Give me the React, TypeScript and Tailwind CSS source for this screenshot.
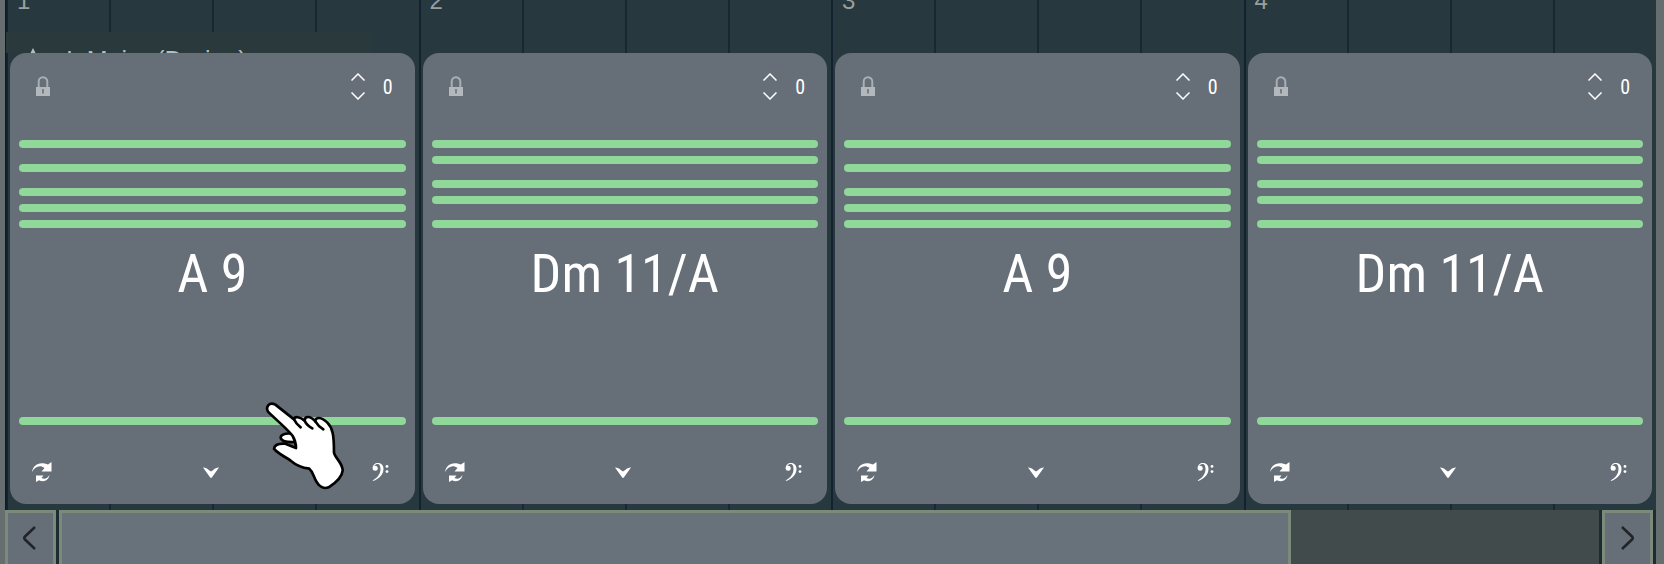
import React from 'react';

const NARROW = "font-['Roboto_Condensed','Liberation_Sans',sans-serif]";

const chords = [
  { bar: 1, name: 'A 9', notes: [0, 3, 6, 8, 10] },
  { bar: 2, name: 'Dm 11/A', notes: [0, 2, 5, 7, 10] },
  { bar: 3, name: 'A 9', notes: [0, 3, 6, 8, 10] },
  { bar: 4, name: 'Dm 11/A', notes: [0, 2, 5, 7, 10] },
];

const SLOTS = Array.from({ length: 11 }, (_, i) => i);
const BEATS = [0, 1, 2, 3];

const LockIcon = () => (
  <svg viewBox="0 0 14 20" className="w-[14px] h-[20px]" aria-hidden="true">
    <path d="M2.7 11V5.5a4.3 4.3 0 0 1 8.6 0V11" fill="none" stroke="#a9b0b3" strokeWidth="2" />
    <rect y="11" width="14" height="9" fill="#b3b8bd" />
    <path d="M6 13h2v4.500H6z" fill="#7b7f80" />
  </svg>
);

const SwapIcon = () => (
  <svg viewBox="0 0 20 20" className="w-5 h-5" fill="#fff" aria-hidden="true">
    <path d="M0 10C1 3 7-1 16 2.500L19.500 0v9.500H9.500L12.500 6C8 2.500 3 4.500 0 10z" />
    <path d="M17.500 13C16.500 18.500 12 20.500 7 18.300L4 20v-6.500h7.500l-2 2.400C13 17.800 15.500 16 17.500 13z" />
  </svg>
);

const ArrowIcon = () => (
  <svg viewBox="0 0 16 11" className="w-4 h-[11px]" fill="#fff" aria-hidden="true">
    <path d="M0 0.500C3 0 5 2.500 8 4.500C11 2.500 13 0 16 0.500L9 10.300Q8 11.500 7 10.300z" />
  </svg>
);

const BassClefIcon = () => (
  <svg viewBox="0 0 17 18" className="w-[17px] h-[18px]" fill="#fff" aria-hidden="true">
    <circle cx="3.200" cy="5.300" r="2.500" />
    <path d="M0.800 5.300C0.500 2 3 0 6 0C9.500 0 11.500 2.500 11.500 6C11.500 11.500 7 16 1 18L0.700 17.400C5.500 14.800 8.500 11 8.500 6C8.500 3 7.700 1 5.600 1C3.500 1 2 2.400 2 4.500z" />
    <circle cx="15" cy="3.400" r="1.400" />
    <circle cx="15" cy="8.600" r="1.400" />
  </svg>
);

const HandCursor = () => (
  <svg
    viewBox="45 33 240 270"
    className="absolute left-[255px] top-[348px] w-[80px] h-[90px] pointer-events-none"
    fill="#fff"
    stroke="#000"
    strokeWidth="8"
    strokeLinejoin="round"
    strokeLinecap="round"
    aria-hidden="true"
  >
    <path d="M132 134C116 127 94 131 92 142C92 153 108 157 134 156z" />
    <path d="M54 65C46 50 58 34 76 44L132 88C134 78 150 80 164 92C164 78 180 76 196 94C196 80 214 80 232 98C248 114 252 134 252 188C256 206 278 218 278 242C276 262 252 282 236 292C222 298 208 290 200 276C190 260 190 246 178 236C150 232 136 224 122 212C106 200 84 192 72 176C74 162 92 160 106 161L138 174C138 158 134 148 128 138C112 116 76 88 54 65z" />
    <path d="M132 88Q138 102 152 112M164 92Q170 106 187 115M196 94Q204 108 220 118" fill="none" />
  </svg>
);

const NoteBar = () => <div className="h-2 rounded-full bg-[#90d79a]" />;

const Stepper = ({ bar }: { bar: number }) => (
  <div className="flex items-center gap-[18px]">
    <div className="flex flex-col gap-[11px]">
      <button type="button" aria-label={`Raise bar ${bar}`}>
        <svg viewBox="0 0 14 8" className="block w-[14px] h-2" fill="none" stroke="#fff" strokeWidth="1.500">
          <path d="M0.500 7.500L7 1l6.500 6.500" />
        </svg>
      </button>
      <button type="button" aria-label={`Lower bar ${bar}`}>
        <svg viewBox="0 0 14 8" className="block w-[14px] h-2" fill="none" stroke="#fff" strokeWidth="1.500">
          <path d="M0.500 0.500L7 7l6.500-6.500" />
        </svg>
      </button>
    </div>
    <output className="pt-px text-[20px] leading-5">0</output>
  </div>
);

const ChordCard = ({ chord, active }: { chord: (typeof chords)[number]; active?: boolean }) => (
  <article className="relative flex flex-col rounded-2xl bg-[#666e78] px-[9px] text-white">
    <div className="flex h-[87px] items-start justify-between pl-[17px] pr-[13px] pt-5">
      <button type="button" aria-label={`Lock bar ${chord.bar}`} className="mt-[3px]">
        <LockIcon />
      </button>
      <Stepper bar={chord.bar} />
    </div>

    <div className="grid grid-rows-11">
      {SLOTS.map((slot) => (
        <div key={slot} className="h-2">
          {chord.notes.includes(slot) && <NoteBar />}
        </div>
      ))}
    </div>

    <h2 className="mt-[18px] flex-1 text-center text-[54px] leading-[56px]">{chord.name}</h2>

    <NoteBar />
    <div className="grid h-[79px] grid-cols-3 items-center pl-[13px] pr-4 pt-[15px]">
      <button type="button" aria-label="Swap chord" className="justify-self-start">
        <SwapIcon />
      </button>
      <button type="button" aria-label="More" className="justify-self-center">
        <ArrowIcon />
      </button>
      <button type="button" aria-label="Bass note" className="justify-self-end">
        <BassClefIcon />
      </button>
    </div>

    {active && <HandCursor />}
  </article>
);

const Timeline = () => (
  <div className="col-start-1 row-start-1 grid grid-cols-4 overflow-hidden" aria-hidden="true">
    {chords.map((chord) => (
      <div key={chord.bar} className="grid grid-cols-4">
        {BEATS.map((beat) => (
          <div key={beat} className={beat === 0 ? 'border-l-2 border-[#14222f]' : 'border-l-2 border-[#1a2733]'}>
            {beat === 0 && (
              <span className="-mt-[11px] block pl-[9px] font-['Liberation_Sans',sans-serif] text-[24px] leading-6 text-[#9a9f9d]">
                {chord.bar}
              </span>
            )}
          </div>
        ))}
      </div>
    ))}
  </div>
);

const App: React.FC = () => {
  return (
    <div className={`flex min-h-screen bg-[#666e70] ${NARROW}`}>
      <div className="w-[5px]" />
      <main className="flex flex-1 flex-col bg-[#1c2c30]">
        <section className="grid flex-1 border-l border-[#10191c] bg-[#27383e]">
          <Timeline />
          <div className="col-start-1 row-start-1 flex flex-col pb-[6px]">
            <div className="flex h-[53px] items-end overflow-hidden">
              <div className="flex h-[21px] w-[366px] items-start gap-[30px] bg-[#29393c] pl-6 pt-4 font-['Liberation_Sans',sans-serif] text-[25px] leading-6 text-[#b4bdc2]">
                <svg viewBox="0 0 6 6" className="h-[6px] w-[6px]" fill="#b4bdc2">
                  <path d="M3 0L6 6H0z" />
                </svg>
                <span className="whitespace-nowrap">I &nbsp;Major (Dorian)</span>
              </div>
            </div>
            <div className="grid flex-1 grid-cols-4">
              {chords.map((chord, idx) => (
                <div key={chord.bar} className="grid px-1">
                  <ChordCard chord={chord} active={idx === 0} />
                </div>
              ))}
            </div>
          </div>
        </section>

        <footer className="mr-[3px] flex h-[54px] gap-[3px]">
          <button
            type="button"
            aria-label="Scroll left"
            className="flex w-[51px] justify-center border-x-3 border-t-3 border-[#7c8a7b] bg-[#666e78] pr-1 pt-[13px]"
          >
            <svg viewBox="0 0 14 24" className="h-6 w-[14px]" fill="none" stroke="#202427" strokeWidth="2.500">
              <path d="M13 1L3 10.500Q1.500 12 3 13.500L13 23" />
            </svg>
          </button>
          <div className="flex-1 bg-[#414b4c]">
            <div className="h-full w-4/5 border-x-3 border-t-3 border-[#7c8a7b] bg-[#68727a]" />
          </div>
          <button
            type="button"
            aria-label="Scroll right"
            className="flex w-[51px] justify-center border-x-3 border-t-3 border-[#7c8a7b] bg-[#666e78] pt-[13px]"
          >
            <svg viewBox="0 0 14 24" className="h-6 w-[14px]" fill="none" stroke="#202427" strokeWidth="2.500">
              <path d="M1 1l10 9.500q1.500 1.500 0 3L1 23" />
            </svg>
          </button>
        </footer>
      </main>
      <div className="w-2" />
    </div>
  );
};

export default App;
